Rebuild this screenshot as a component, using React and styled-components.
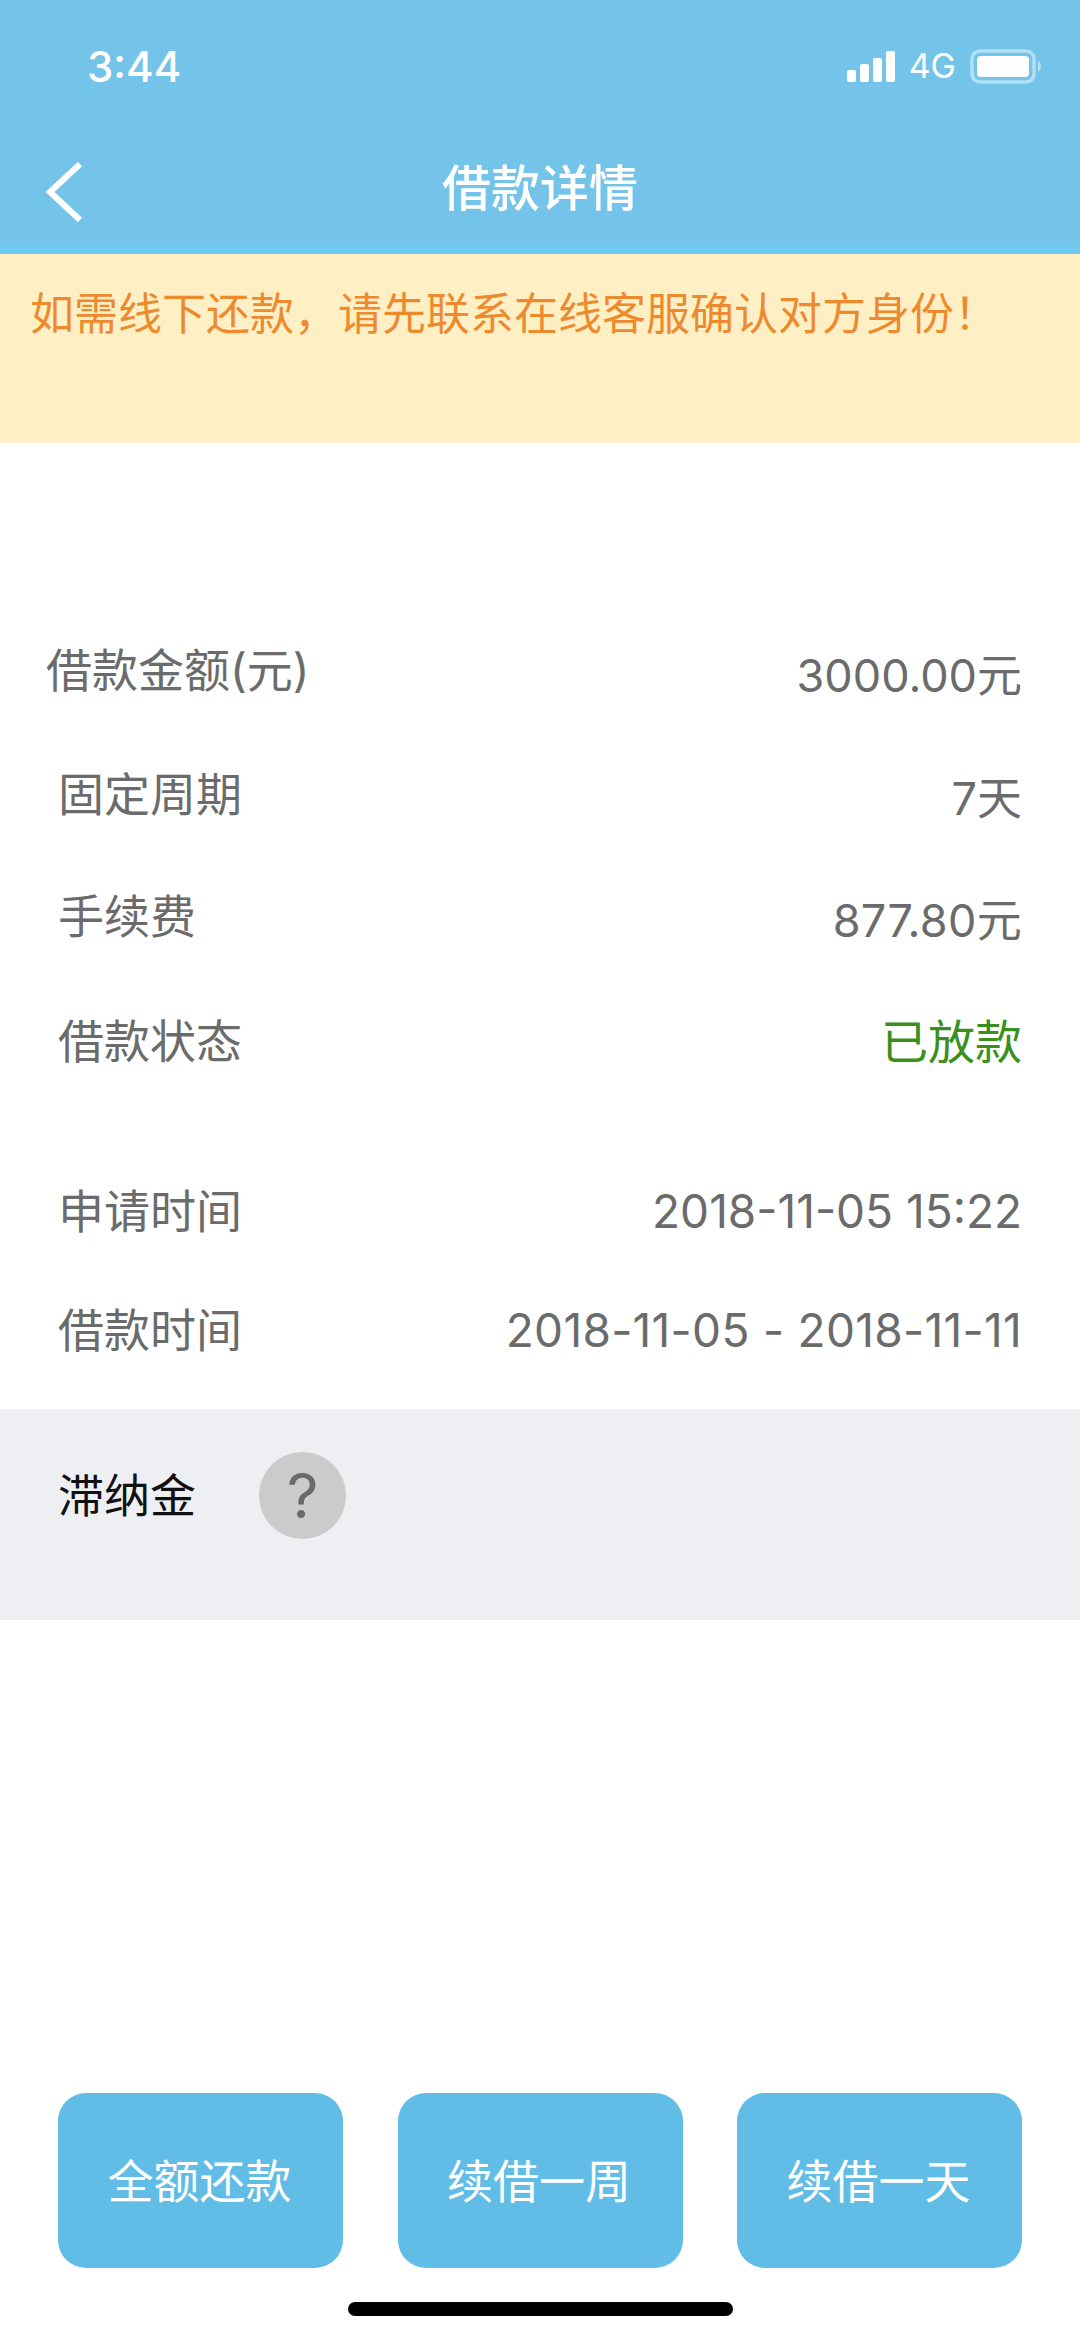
import styled, { createGlobalStyle } from 'styled-components';

const GlobalStyle = createGlobalStyle`
  html, body { margin: 0; padding: 0; background: #fff; }
  body { font-family: Inter, "Noto Sans CJK SC", sans-serif; }
  * { box-sizing: border-box; }
`;

const Page = styled.div`
  width: 1080px;
  height: 2339px;
  display: flex;
  flex-direction: column;
  background: #fff;
  overflow: hidden;
`;

const Header = styled.header`
  background: #74c3e9;
  border-bottom: 8px solid #6ec8f0;
  color: #fff;
`;

const StatusBar = styled.div`
  height: 132px;
  padding: 0 38px 0 87px;
  display: flex;
  align-items: center;
  justify-content: space-between;
`;

const Time = styled.span`
  font-size: 42px;
  font-weight: 500;
`;

const StatusIcons = styled.div`
  display: flex;
  align-items: center;
  gap: 14px;
`;

const Network = styled.span`
  font-size: 34px;
  line-height: 34px;
`;

const Nav = styled.nav`
  height: 114px;
  padding: 0 45px;
  display: grid;
  grid-template-columns: 1fr auto 1fr;
  align-items: center;
`;

const BackSvg = styled.svg`
  margin-top: 6px;
`;

const Title = styled.h1`
  margin: 0;
  font-size: 49px;
  font-weight: 500;
  line-height: 60px;
`;

const Notice = styled.div`
  height: 189px;
  padding: 30px 0 0 30px;
  background: #fef0c4;
  color: #ee8a2e;
  font-size: 44px;
  line-height: 60px;
  white-space: nowrap;
`;

const Details = styled.div`
  height: 966px;
  padding: 0 58px;
`;

const Row = styled.div`
  display: flex;
  justify-content: space-between;
  align-items: flex-start;
  height: 60px;
  margin-top: ${({ $top }) => $top}px;
  margin-left: ${({ $indent }) => $indent || 0}px;
`;

const Label = styled.span`
  font-size: 46px;
  line-height: 60px;
  color: #6b6b6b;
`;

const Value = styled.span`
  margin-top: ${({ $drop }) => $drop || 0}px;
  font-size: ${({ $size }) => $size || 45}px;
  letter-spacing: ${({ $spacing }) => $spacing || 0}px;
  line-height: 60px;
  color: ${({ $color }) => $color || '#6b6b6b'};
  white-space: nowrap;
`;

const LatePanel = styled.div`
  height: 211px;
  padding: 43px 0 0 58px;
  display: flex;
  align-items: flex-start;
  gap: 63px;
  background: #eeeff3;
`;

const LateLabel = styled.span`
  font-size: 46px;
  line-height: 87px;
  color: #111;
`;

const Help = styled.span`
  width: 87px;
  height: 87px;
  border-radius: 50%;
  display: flex;
  align-items: center;
  justify-content: center;
  background: #cbcbcb;
  color: #6a6a6a;
  font-size: 62px;
`;

const Footer = styled.div`
  margin-top: auto;
  padding: 0 58px 23px;
  display: flex;
  flex-direction: column;
  align-items: center;
  gap: 34px;
`;

const Actions = styled.div`
  width: 100%;
  display: flex;
  justify-content: space-between;
`;

const ActionButton = styled.button`
  width: 285px;
  height: 175px;
  padding: 0 2px 6px 0;
  border: none;
  border-radius: 28px;
  background: #61bce6;
  color: #fff;
  font-family: inherit;
  font-size: 46px;
`;

const HomeBar = styled.div`
  width: 385px;
  height: 14px;
  border-radius: 7px;
  background: #000;
`;

const rows = [
  { label: '借款金额(元)', value: '3000.00元', top: 197, drop: 6, indent: -12 },
  { label: '固定周期', value: '7天', top: 64, drop: 5 },
  { label: '手续费', value: '877.80元', top: 62, drop: 5, spacing: 0.3 },
  { label: '借款状态', value: '已放款', top: 65, drop: 1, color: '#3a8f1d', size: 47 },
  { label: '申请时间', value: '2018-11-05 15:22', top: 110, size: 46 },
  { label: '借款时间', value: '2018-11-05 - 2018-11-11', top: 59, size: 46, spacing: 0.3 },
];

const Signal = () => (
  <svg width="48" height="31" viewBox="0 0 48 31" fill="#fff">
    <rect x="0" y="19" width="9" height="12" rx="2" />
    <rect x="13" y="13" width="9" height="18" rx="2" />
    <rect x="26" y="7" width="9" height="24" rx="2" />
    <rect x="39" y="0" width="9" height="31" rx="2" />
  </svg>
);

const Battery = () => (
  <svg width="72" height="35" viewBox="0 0 72 35">
    <rect x="2" y="2" width="62" height="31" rx="8" fill="none" stroke="#b4e0f5" strokeWidth="3.5" />
    <rect x="7" y="7" width="52" height="21" rx="4" fill="#fff" />
    <path d="M68 12c2 1 3 3 3 5.500s-1 4.500-3 5.500z" fill="#b4e0f5" />
  </svg>
);

const BackIcon = () => (
  <BackSvg width="38" height="62" viewBox="0 0 38 62" fill="none">
    <path d="M35 3 5 31l30 28" stroke="#fff" strokeWidth="6" />
  </BackSvg>
);

const App = () => (
  <Page>
    <GlobalStyle />
    <Header>
      <StatusBar>
        <Time>3:44</Time>
        <StatusIcons>
          <Signal />
          <Network>4G</Network>
          <Battery />
        </StatusIcons>
      </StatusBar>
      <Nav>
        <BackIcon />
        <Title>借款详情</Title>
      </Nav>
    </Header>
    <Notice>如需线下还款，请先联系在线客服确认对方身份！</Notice>
    <Details>
      {rows.map((row) => (
        <Row key={row.label} $top={row.top} $indent={row.indent}>
          <Label>{row.label}</Label>
          <Value $drop={row.drop} $color={row.color} $size={row.size} $spacing={row.spacing}>
            {row.value}
          </Value>
        </Row>
      ))}
    </Details>
    <LatePanel>
      <LateLabel>滞纳金</LateLabel>
      <Help>?</Help>
    </LatePanel>
    <Footer>
      <Actions>
        <ActionButton>全额还款</ActionButton>
        <ActionButton>续借一周</ActionButton>
        <ActionButton>续借一天</ActionButton>
      </Actions>
      <HomeBar />
    </Footer>
  </Page>
);

export default App;
